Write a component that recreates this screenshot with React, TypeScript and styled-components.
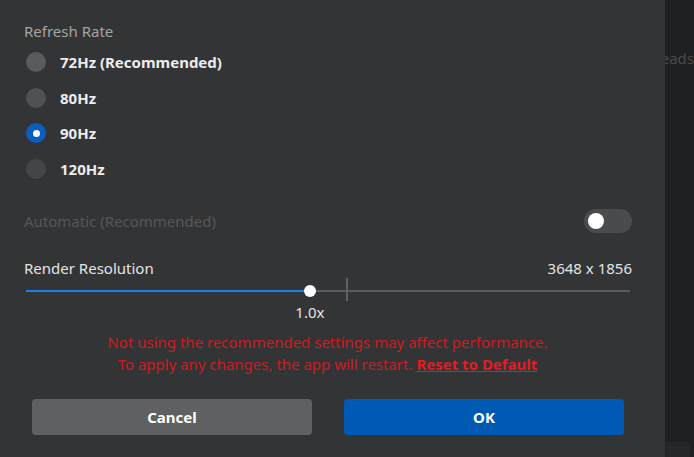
import React from "react";
import styled, { createGlobalStyle } from "styled-components";

const Global = createGlobalStyle`
  html, body { margin: 0; padding: 0; background: #1f2022; }
  body { font-family: "Noto Sans", "Open Sans", sans-serif; }
  #root { width: 694px; height: 457px; overflow: hidden; }
`;

const Screen = styled.div`
  display: flex;
  width: 694px;
  height: 457px;
  overflow: hidden;
`;

const Modal = styled.div`
  width: 665px;
  flex: none;
  height: 457px;
  background: #333436;
  box-sizing: border-box;
  padding: 21px 33px 0 24px;
  display: flex;
  flex-direction: column;
  font-size: 15px;
  line-height: 20px;
`;

const Side = styled.div`
  flex: 1;
  position: relative;
  background: #1f2022;
  overflow: hidden;
`;

const SideText = styled.div`
  position: absolute;
  top: 48px;
  right: 0;
  color: #4a4b4d;
  font-size: 15px;
  white-space: nowrap;
`;

const SideCard = styled.div`
  position: absolute;
  top: 442px;
  left: 1px;
  width: 24px;
  height: 30px;
  background: #262729;
  border-radius: 0 5px 0 0;
`;

const SectionLabel = styled.div`
  color: #a3a4a6;
  height: 20px;
`;

const RadioList = styled.div`
  display: flex;
  flex-direction: column;
  margin-top: 3px;
`;

const RadioRow = styled.div`
  display: flex;
  align-items: center;
  height: 35.7px;
  gap: 14px;
  padding-left: 2px;
`;

const RadioDot = styled.span<{ $color: string; $checked?: boolean }>`
  width: 20px;
  height: 20px;
  border-radius: 50%;
  background: ${(p) => (p.$checked ? "#0a5ec0" : p.$color)};
  display: flex;
  align-items: center;
  justify-content: center;
  flex: none;
  &::after {
    content: "";
    display: ${(p) => (p.$checked ? "block" : "none")};
    width: 7px;
    height: 7px;
    border-radius: 50%;
    background: #ffffff;
  }
`;

const RadioText = styled.span`
  color: #ececec;
  font-weight: 700;
`;

const Row = styled.div<{ $mt: number; $h: number }>`
  display: flex;
  align-items: center;
  justify-content: space-between;
  margin-top: ${(p) => p.$mt}px;
  height: ${(p) => p.$h}px;
`;

const DimText = styled.span`
  color: #56575a;
`;

const PlainText = styled.span`
  color: #e4e4e4;
`;

const Toggle = styled.div`
  width: 48px;
  height: 24px;
  border-radius: 12px;
  background: #4a4b4d;
  display: flex;
  align-items: center;
  padding-left: 4px;
  box-sizing: border-box;
  &::before {
    content: "";
    width: 16px;
    height: 16px;
    border-radius: 50%;
    background: #ffffff;
  }
`;

const Slider = styled.div`
  position: relative;
  height: 24px;
  margin: 0 2px;
`;

const Track = styled.div`
  position: absolute;
  left: 0;
  right: 0;
  top: 12px;
  height: 2px;
  background: #5b5c5e;
`;

const Fill = styled.div`
  position: absolute;
  left: 0;
  top: 12px;
  height: 2px;
  background: #1a7ee6;
`;

const Tick = styled.div`
  position: absolute;
  top: 0;
  width: 2px;
  height: 23px;
  background: #606163;
`;

const Thumb = styled.div`
  position: absolute;
  top: 7px;
  width: 12px;
  height: 12px;
  margin-left: -6px;
  border-radius: 50%;
  background: #ffffff;
`;

const ValueRow = styled.div`
  position: relative;
  height: 20px;
  margin: 0 2px;
`;

const ValueLabel = styled.span`
  position: absolute;
  transform: translateX(-50%);
  color: #e4e4e4;
  white-space: nowrap;
`;

const Warning = styled.div`
  margin-top: 9px;
  color: #cf1a1f;
  text-align: center;
  line-height: 22px;
  margin-right: 1px;
`;

const ResetLink = styled.a`
  color: #ea1820;
  font-weight: 700;
  text-decoration: underline;
  cursor: pointer;
`;

const Buttons = styled.div`
  display: flex;
  gap: 32px;
  margin-top: 24px;
  margin-left: 8px;
`;

const Button = styled.button<{ $primary?: boolean }>`
  width: 280px;
  height: 36px;
  border: none;
  border-radius: 4px;
  background: ${(p) => (p.$primary ? "#005ab4" : "#5f6062")};
  color: #ffffff;
  font-family: inherit;
  font-weight: 700;
  font-size: 15px;
  cursor: pointer;
`;

const rates = [
  { label: "72Hz (Recommended)", color: "#5a5b5d" },
  { label: "80Hz", color: "#505153" },
  { label: "90Hz", color: "#505153", checked: true },
  { label: "120Hz", color: "#444547" },
];

export default function App() {
  const pct = 0.47;
  const tick = 0.529;
  return (
    <>
      <Global />
      <Screen>
        <Modal>
          <SectionLabel>Refresh Rate</SectionLabel>
          <RadioList>
            {rates.map((r) => (
              <RadioRow key={r.label}>
                <RadioDot $color={r.color} $checked={r.checked} />
                <RadioText>{r.label}</RadioText>
              </RadioRow>
            ))}
          </RadioList>
          <Row $mt={22} $h={24}>
            <DimText>Automatic (Recommended)</DimText>
            <Toggle />
          </Row>
          <Row $mt={25} $h={20}>
            <PlainText>Render Resolution</PlainText>
            <PlainText>3648 x 1856</PlainText>
          </Row>
          <Slider>
            <Track />
            <Fill style={{ width: `${pct * 100}%` }} />
            <Tick style={{ left: `${tick * 100}%` }} />
            <Thumb style={{ left: `${pct * 100}%` }} />
          </Slider>
          <ValueRow>
            <ValueLabel style={{ left: `${pct * 100}%` }}>1.0x</ValueLabel>
          </ValueRow>
          <Warning>
            Not using the recommended settings may affect performance.
            <br />
            To apply any changes, the app will restart.{" "}
            <ResetLink>Reset to Default</ResetLink>
          </Warning>
          <Buttons>
            <Button>Cancel</Button>
            <Button $primary>OK</Button>
          </Buttons>
        </Modal>
        <Side>
          <SideText>eads</SideText>
          <SideCard />
        </Side>
      </Screen>
    </>
  );
}
